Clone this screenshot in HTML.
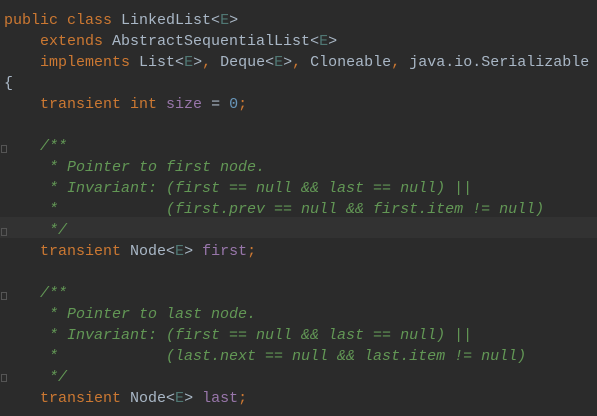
<!DOCTYPE html>
<html><head><style>
html,body{margin:0;padding:0;background:#2b2b2b;width:597px;height:416px;overflow:hidden}
pre{margin:0;position:absolute;left:4px;top:10px;font-family:"Liberation Mono",monospace;font-size:15px;line-height:21px;color:#a9b7c6}
.k{color:#cc7832}.t{color:#507874}.f{color:#9876aa}.n{color:#6897bb}.c{color:#629755;font-style:italic}
.hl{position:absolute;left:0;top:217px;width:597px;height:21px;background:#323232}
.fm{position:absolute;left:1px;width:4px;height:6px;border:1px solid #555}
</style></head><body>
<div class="hl"></div>
<div class="fm" style="top:145px"></div><div class="fm" style="top:228px"></div>
<div class="fm" style="top:292px"></div><div class="fm" style="top:374px"></div>
<pre><span class="k">public class </span>LinkedList&lt;<span class="t">E</span>&gt;
    <span class="k">extends </span>AbstractSequentialList&lt;<span class="t">E</span>&gt;
    <span class="k">implements </span>List&lt;<span class="t">E</span>&gt;<span class="k">, </span>Deque&lt;<span class="t">E</span>&gt;<span class="k">, </span>Cloneable<span class="k">, </span>java.io.Serializable
{
    <span class="k">transient int </span><span class="f">size </span>= <span class="n">0</span><span class="k">;</span>

<span class="c">    /**
     * Pointer to first node.
     * Invariant: (first == null &amp;&amp; last == null) ||
     *            (first.prev == null &amp;&amp; first.item != null)
     */</span>
    <span class="k">transient </span>Node&lt;<span class="t">E</span>&gt; <span class="f">first</span><span class="k">;</span>

<span class="c">    /**
     * Pointer to last node.
     * Invariant: (first == null &amp;&amp; last == null) ||
     *            (last.next == null &amp;&amp; last.item != null)
     */</span>
    <span class="k">transient </span>Node&lt;<span class="t">E</span>&gt; <span class="f">last</span><span class="k">;</span>
</pre>
</body></html>
